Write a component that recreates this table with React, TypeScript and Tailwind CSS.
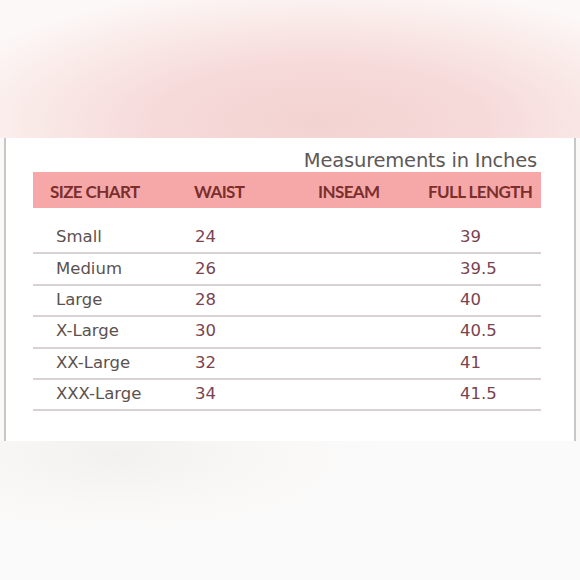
const rows = [
  { size: 'Small', waist: '24', inseam: '', length: '39' },
  { size: 'Medium', waist: '26', inseam: '', length: '39.5' },
  { size: 'Large', waist: '28', inseam: '', length: '40' },
  { size: 'X-Large', waist: '30', inseam: '', length: '40.5' },
  { size: 'XX-Large', waist: '32', inseam: '', length: '41' },
  { size: 'XXX-Large', waist: '34', inseam: '', length: '41.5' },
]

const cols = 'grid grid-cols-[161px_124px_110px_113px]'

export default function App() {
  return (
    <div className="w-[580px] h-[580px] flex flex-col overflow-hidden bg-[#faf9f8]">
      {/* blurred backdrop, top */}
      <div className="h-[138px] shrink-0 bg-[radial-gradient(ellipse_68%_100%_at_55%_88%,#f2d3d1_0%,#f6d9d9_40%,#f9e8e6_70%,#fcf8f7_100%)]" />

      {/* chart card */}
      <div className="h-[303px] shrink-0 mx-[4px] bg-white border-x-2 border-[#c9c6c6] pl-[27px] pr-[33px] pt-[12px]">
        <div className="flex justify-end pr-[4px] h-[22px] items-center">
          <p className="text-[19.5px] leading-none text-[#5e5857] font-['DejaVu_Sans',sans-serif] tracking-[-0.2px]">
            Measurements in Inches
          </p>
        </div>

        <div className={`${cols} h-[36px] bg-[#f6a8a8] items-center pt-[3px] font-['Lato',sans-serif] font-bold text-[17px] tracking-[-0.6px] text-[#7a2f2d]`}>
          <span className="pl-[17px]">SIZE CHART</span>
          <span>WAIST</span>
          <span>INSEAM</span>
          <span>FULL LENGTH</span>
        </div>

        <div className="mt-[15px] font-['DejaVu_Sans',sans-serif] text-[16.5px]">
          {rows.map((r) => (
            <div
              key={r.size}
              className={`${cols} h-[31.4px] items-center border-b-2 border-[#d9d2d2]`}
            >
              <span className="pl-[23px] text-[#5b524f]">{r.size}</span>
              <span className="pl-[1px] text-[#7a4350]">{r.waist}</span>
              <span className="text-[#7a4350]">{r.inseam}</span>
              <span className="pl-[32px] text-[#7a4350]">{r.length}</span>
            </div>
          ))}
        </div>
      </div>

      {/* blurred backdrop, bottom */}
      <div className="flex-1 bg-[radial-gradient(ellipse_45%_60%_at_20%_10%,#f2f1ef_0%,#f9f8f7_60%,#fbfafa_100%)]" />
    </div>
  )
}
